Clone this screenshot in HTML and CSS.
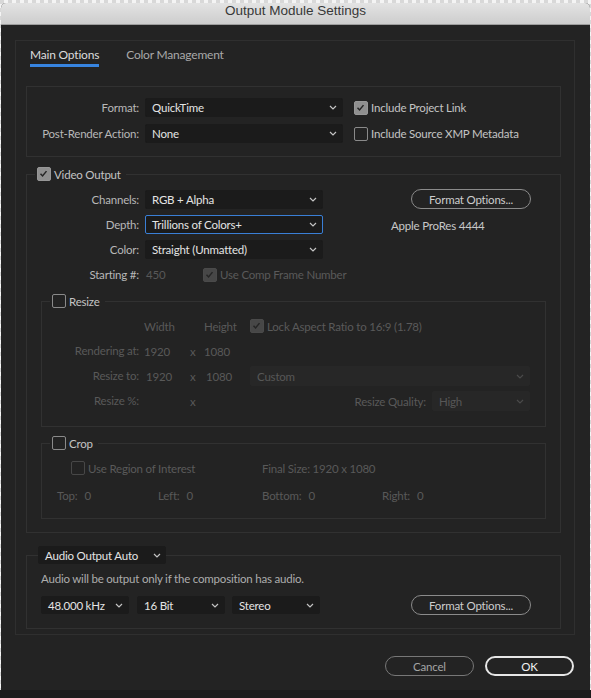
FILE: index.html
```html
<!DOCTYPE html>
<html>
    <head>
        <meta charset="utf-8">
        <title>Output Module Settings</title>
        <link rel="stylesheet" href="styles.css">
    </head>
    <body>
        <div class="window">
            <div class="titlebar">Output Module Settings</div>
            <div class="panel">
                <div class="tabs">
                    <span class="tab active">Main Options</span>
                    <span class="tab">Color Management</span>
                </div>

                <div class="box format-box">
                    <div class="format-grid">
                        <label class="lbl">Format:</label>
                        <div class="select">QuickTime<svg viewBox="0 0 8 5"><path d="M1 1l3 3 3-3"/></svg></div>
                        <div class="check"><span class="cb on"><svg viewBox="0 0 14 14"><path d="M3.2 7.4l2.6 2.7L10.8 4"/></svg></span>Include Project Link</div>
                        <label class="lbl">Post-Render Action:</label>
                        <div class="select">None<svg viewBox="0 0 8 5"><path d="M1 1l3 3 3-3"/></svg></div>
                        <div class="check"><span class="cb"></span>Include Source XMP Metadata</div>
                    </div>
                </div>

                <fieldset class="group video">
                    <legend><span class="cb on"><svg viewBox="0 0 14 14"><path d="M3.2 7.4l2.6 2.7L10.8 4"/></svg></span>Video Output</legend>
                    <div class="video-grid">
                        <label class="lbl">Channels:</label>
                        <div class="select">RGB + Alpha<svg viewBox="0 0 8 5"><path d="M1 1l3 3 3-3"/></svg></div>
                        <div class="side"><button class="pill">Format Options...</button></div>
                        <label class="lbl">Depth:</label>
                        <div class="select focus">Trillions of Colors+<svg viewBox="0 0 8 5"><path d="M1 1l3 3 3-3"/></svg></div>
                        <div class="side codec">Apple ProRes 4444</div>
                        <label class="lbl">Color:</label>
                        <div class="select">Straight (Unmatted)<svg viewBox="0 0 8 5"><path d="M1 1l3 3 3-3"/></svg></div>
                        <div class="side"></div>
                        <label class="lbl">Starting #:</label>
                        <div class="start">
                            <span class="num">450</span>
                            <div class="check dim"><span class="cb on"><svg viewBox="0 0 14 14"><path d="M3.2 7.4l2.6 2.7L10.8 4"/></svg></span>Use Comp Frame Number</div>
                        </div>
                        <div class="side"></div>
                    </div>

                    <fieldset class="group inner resize">
                        <legend><span class="cb"></span>Resize</legend>
                        <div class="resize-grid">
                            <span></span>
                            <span>Width</span>
                            <span></span>
                            <span>Height</span>
                            <div class="check dim"><span class="cb on"><svg viewBox="0 0 14 14"><path d="M3.2 7.4l2.6 2.7L10.8 4"/></svg></span>Lock Aspect Ratio to 16:9 (1.78)</div>

                            <span class="lbl">Rendering at:</span>
                            <span>1920</span>
                            <span>x</span>
                            <span>1080</span>
                            <span></span>

                            <span class="lbl">Resize to:</span>
                            <span class="val">1920</span>
                            <span>x</span>
                            <span class="val">1080</span>
                            <div class="select off">Custom<svg viewBox="0 0 8 5"><path d="M1 1l3 3 3-3"/></svg></div>

                            <span class="lbl">Resize %:</span>
                            <span></span>
                            <span>x</span>
                            <span></span>
                            <div class="quality">
                                <span>Resize Quality:</span>
                                <div class="select off">High<svg viewBox="0 0 8 5"><path d="M1 1l3 3 3-3"/></svg></div>
                            </div>
                        </div>
                    </fieldset>

                    <fieldset class="group inner crop">
                        <legend><span class="cb"></span>Crop</legend>
                        <div class="crop-row first">
                            <div class="check dim roi"><span class="cb"></span>Use Region of Interest</div>
                            <span>Final Size: 1920 x 1080</span>
                        </div>
                        <div class="crop-row sides">
                            <span class="pair">Top:<b>0</b></span>
                            <span class="pair">Left:<b>0</b></span>
                            <span class="pair">Bottom:<b>0</b></span>
                            <span class="pair">Right:<b>0</b></span>
                        </div>
                    </fieldset>
                </fieldset>

                <fieldset class="group audio">
                    <legend><div class="select">Audio Output Auto<svg viewBox="0 0 8 5"><path d="M1 1l3 3 3-3"/></svg></div></legend>
                    <p class="note">Audio will be output only if the composition has audio.</p>
                    <div class="audio-row">
                        <div class="select">48.000 kHz<svg viewBox="0 0 8 5"><path d="M1 1l3 3 3-3"/></svg></div>
                        <div class="select">16 Bit<svg viewBox="0 0 8 5"><path d="M1 1l3 3 3-3"/></svg></div>
                        <div class="select">Stereo<svg viewBox="0 0 8 5"><path d="M1 1l3 3 3-3"/></svg></div>
                        <button class="pill">Format Options...</button>
                    </div>
                </fieldset>
            </div>

            <div class="footer">
                <button class="pill cancel">Cancel</button>
                <button class="pill ok">OK</button>
            </div>
        </div>
    </body>
</html>
```

FILE: styles.css
```css
* {
    box-sizing: border-box;
}
body {
    margin: 0;
    height: 698px;
    overflow: hidden;
    background:
        linear-gradient(#1c1c1c, #1c1c1c) left bottom / 100% 8px no-repeat,
        repeating-conic-gradient(#f4f4f4 0 25%, #d8d8d8 0 50%) 0 0 / 8px 8px;
    font-family: Lato, "Noto Sans", sans-serif;
    font-size: 11.5px;
    letter-spacing: -0.2px;
    color: #b8b8b8;
}
.window {
    margin: 3px 1px 0;
    width: 589px;
    height: 687px;
    background: #232323;
    border-radius: 5px 5px 0 0;
    overflow: hidden;
}
.titlebar {
    height: 22px;
    line-height: 22px;
    text-align: center;
    background: linear-gradient(#e3e3e3, #cdcdcd);
    border-bottom: 1px solid #9d9d9d;
    color: #383838;
    font: 13.5px "Liberation Sans", Arial, sans-serif;
    letter-spacing: 0;
}
.panel {
    margin: 15px 0 0 14px;
    width: 560px;
    height: 595px;
    border: 1px solid #2f2f2f;
    padding-left: 10px;
}
.tabs {
    display: flex;
    gap: 27px;
    padding: 6px 0 0 4px;
    font-size: 12px;
}
.tab {
    line-height: 16px;
    padding-bottom: 1px;
    border-bottom: 3px solid transparent;
    color: #a9a9a9;
}
.tab.active {
    color: #dcdcdc;
    border-bottom-color: #3784df;
}

.box, fieldset {
    width: 535px;
    border: 1px solid #313131;
}
.format-box {
    margin-top: 19px;
    padding: 11px 0 13px;
}
.format-grid {
    display: grid;
    grid-template-columns: 112px 198px auto;
    grid-auto-rows: 19px;
    column-gap: 6px;
    row-gap: 7px;
}
.lbl {
    text-align: right;
    line-height: 19px;
    white-space: nowrap;
}

.select {
    display: flex;
    align-items: center;
    justify-content: space-between;
    height: 19px;
    padding: 0 5px 0 6px;
    background: #1b1b1b;
    border: 1px solid #1b1b1b;
    border-radius: 2px;
    color: #e4e4e4;
    white-space: nowrap;
}
.select svg {
    width: 8px;
    height: 5px;
    fill: none;
    stroke: #c4c4c4;
    stroke-width: 1.2;
}
.select.focus {
    border-color: #3a7fd6;
}
.select.off {
    background: #272727;
    border-color: #272727;
    color: #575757;
}
.select.off svg {
    stroke: #4a4a4a;
}

.check {
    display: flex;
    align-items: center;
    gap: 3px;
    color: #c4c4c4;
    white-space: nowrap;
}
.format-grid .check {
    margin-left: 5px;
}
.cb {
    width: 14px;
    height: 14px;
    flex: none;
    border: 1.5px solid #8a8a8a;
    border-radius: 2px;
}
.cb.on {
    background: #8f8f8f;
    border-color: #979797;
}
.cb svg {
    display: block;
    width: 11px;
    height: 11px;
    fill: none;
    stroke: #252525;
    stroke-width: 1.9;
}
.dim {
    color: #5a5a5a;
}
.dim .cb {
    border-color: #474747;
}
.dim .cb.on {
    background: #474747;
    border-color: #4a4a4a;
}

fieldset {
    margin: 0;
    padding: 0;
    min-width: 0;
}
legend {
    display: flex;
    align-items: center;
    gap: 3px;
    height: 16px;
    margin-left: 8px;
    padding: 0 5px 0 2px;
    color: #c4c4c4;
}

.video {
    margin-top: 9px;
    padding: 8px 0 13px;
}
.video-grid {
    display: grid;
    grid-template-columns: 112px 178px auto;
    grid-auto-rows: 19px;
    column-gap: 6px;
    row-gap: 6px;
}
.side {
    padding-left: 62px;
}
.codec {
    padding-top: 4px;
    color: #c8c8c8;
}
.start {
    display: flex;
    align-items: center;
    padding-left: 1px;
    white-space: nowrap;
}
.num {
    flex: none;
    width: 57px;
    color: #585858;
}
.start .check {
    flex: none;
}

.pill {
    height: 20px;
    width: 120px;
    padding: 0;
    background: transparent;
    border: 1.5px solid #8b8b8b;
    border-radius: 10px;
    color: #cdcdcd;
    font: inherit;
    letter-spacing: inherit;
}
.side .pill {
    margin-left: 20px;
    margin-top: -1px;
}

.inner {
    width: 505px;
    margin-left: 14px;
}
.resize {
    margin-top: 9px;
    padding: 7px 0 15px;
}
.resize-grid {
    display: grid;
    grid-template-columns: 102px 46px 14px 46px 280px;
    grid-auto-rows: 20px;
    row-gap: 5px;
    align-items: center;
    color: #595959;
}
.resize-grid .lbl {
    padding-right: 5px;
    line-height: 20px;
}
.resize-grid .val {
    padding-left: 2px;
}
.resize-grid .select {
    height: 20px;
}
.quality {
    display: flex;
    align-items: center;
    justify-content: flex-end;
    gap: 6px;
}
.quality .select {
    width: 98px;
}

.crop {
    margin-top: 8px;
    padding: 8px 0 14px;
}
.crop-row {
    display: flex;
    align-items: center;
    height: 18px;
    color: #595959;
}
.crop-row.first {
    padding-left: 29px;
}
.roi {
    width: 191px;
}
.crop-row.sides {
    margin-top: 9px;
    padding-left: 15px;
}
.pair {
    display: flex;
    gap: 7px;
}
.pair b {
    font-weight: normal;
}
.pair:nth-child(1) { width: 101px; }
.pair:nth-child(2) { width: 104px; }
.pair:nth-child(3) { width: 120px; }

.audio {
    margin-top: 13px;
    padding: 0 0 13px 14px;
}
.audio legend {
    margin-left: -3px;
    padding: 0;
    height: 18px;
}
.audio legend .select {
    width: 128px;
    height: 18px;
    padding-right: 4px;
}
.note {
    margin: 7px 0 0;
    line-height: 16px;
    color: #adadad;
}
.audio-row {
    display: flex;
    align-items: center;
    height: 20px;
    margin-top: 8px;
}
.audio-row .select {
    width: 88px;
    height: 18px;
    margin-right: 8px;
}
.audio-row .select:nth-child(2) {
    margin-right: 7px;
}
.audio-row .pill {
    margin-left: 83px;
}

.footer {
    display: flex;
    justify-content: flex-end;
    gap: 11px;
    padding: 21px 16px 0 0;
}
.footer .pill {
    width: 89px;
    height: 20px;
}
.cancel {
    border-color: #777;
    color: #a5a5a5;
}
.ok {
    border: 2px solid #e6e6e6;
    color: #f2f2f2;
}
```
